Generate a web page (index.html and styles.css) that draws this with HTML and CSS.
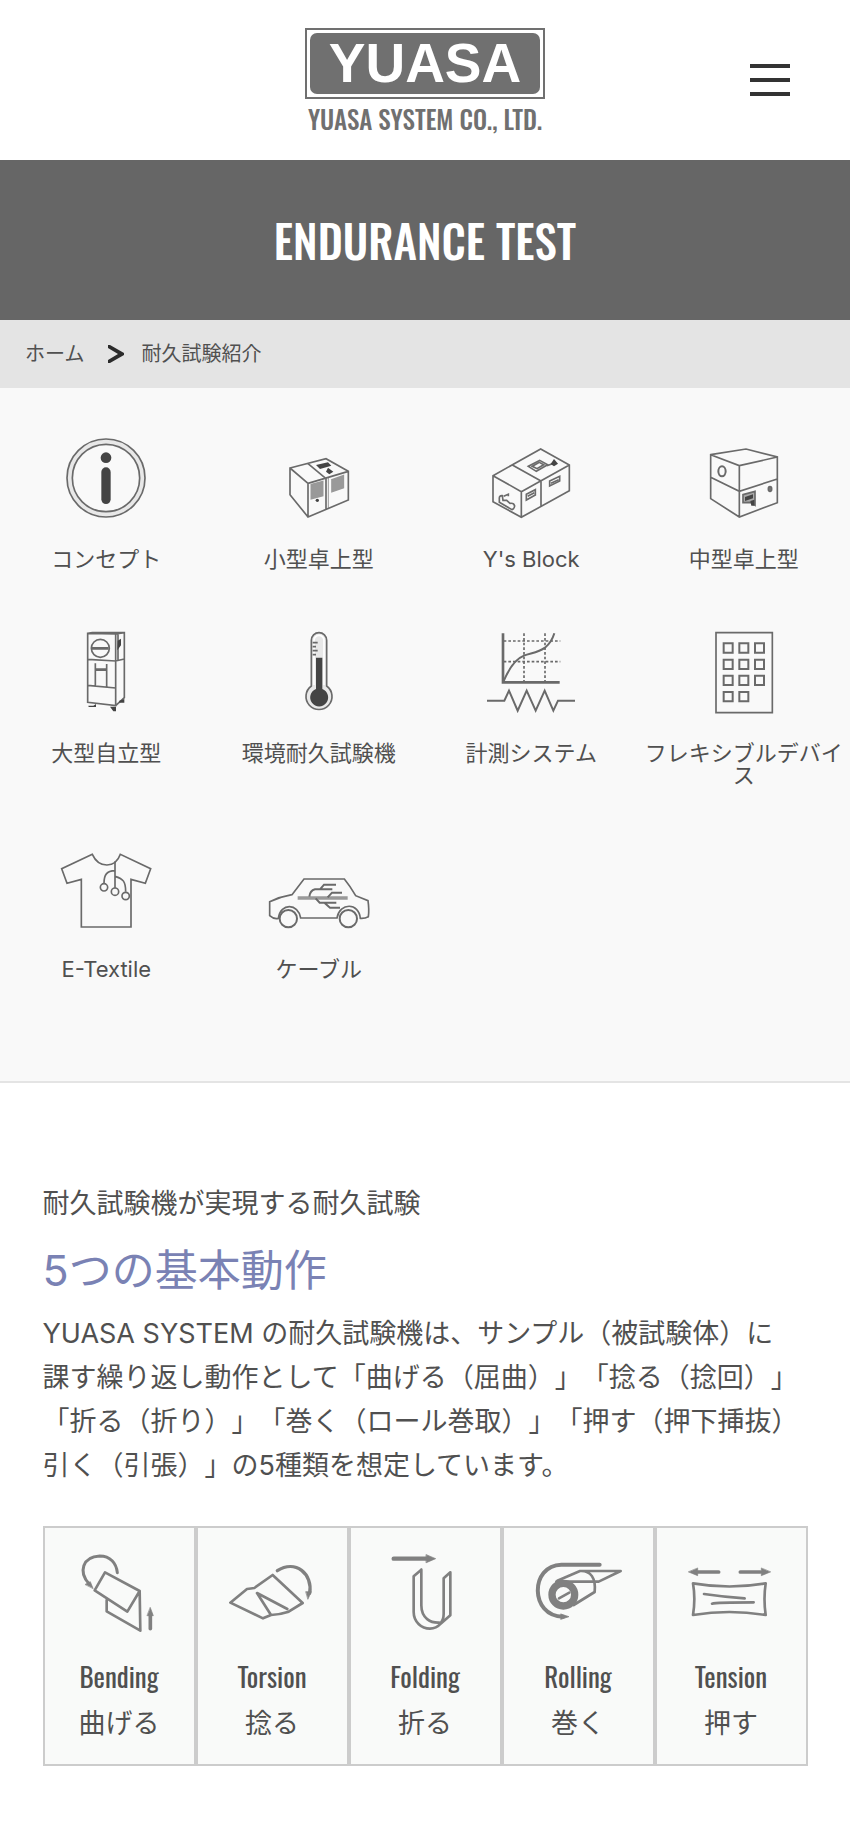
FILE: index.html
```html
<!DOCTYPE html>
<html lang="ja">
<head>
    <meta charset="UTF-8">
    <meta name="viewport" content="width=device-width, initial-scale=1.0">
    <title>耐久試験紹介 | YUASA SYSTEM CO., LTD.</title>
    <link rel="stylesheet" href="styles.css">
</head>
<body>
    <header class="header">
        <a class="logo" href="#">
            <span class="logo-frame"><span class="logo-mark">YUASA</span></span>
            <span class="logo-name">YUASA SYSTEM CO., LTD.</span>
        </a>
        <button class="menu-button" type="button" aria-label="メニュー">
            <span></span>
            <span></span>
            <span></span>
        </button>
    </header>

    <div class="hero">
        <h1>ENDURANCE TEST</h1>
    </div>

    <nav class="breadcrumb">
        <a href="#">ホーム</a>
        <svg width="16" height="18" viewBox="0 0 16 18"><path d="M0 0h2l14 8v2L2 18H0v-3l10-6L0 3z" fill="#2b2b2b"/></svg>
        <span>耐久試験紹介</span>
    </nav>

    <nav class="categories">
        <a class="category" href="#">
            <span class="category-icon">
                <svg width="80" height="80" viewBox="0 0 240 240">
                    <circle cx="120" cy="120" r="109" stroke="#e8e8e8" stroke-width="14"/>
                    <circle cx="120" cy="120" r="117"/>
                    <circle cx="120" cy="120" r="101"/>
                    <circle cx="120" cy="59" r="16" class="solid"/>
                    <rect x="106" y="88" width="28" height="110" rx="14" class="solid"/>
                </svg>
            </span>
            <span>コンセプト</span>
        </a>
        <a class="category" href="#">
            <span class="category-icon">
                <svg width="60" height="60" viewBox="867 113 180 180">
                    <path d="M870 143l108-28 67 38v86l-121 51-54-67zM870 143l54 46v101M924 189l121-36M924 130l54 45v92"/>
                    <path d="M985 172v93" class="thin"/>
                    <path d="M948 134l36-8 10 10-34 10zM984 142l16 12-12 8-10-8z" class="solid"/>
                    <path d="M934 193l34-9v42l-34 9zM996 178l34-12v36l-34 12z" fill="#999" stroke="#999"/>
                    <circle cx="952" cy="240" r="5" class="solid"/>
                </svg>
            </span>
            <span>小型卓上型</span>
        </a>
        <a class="category" href="#">
            <span class="category-icon">
                <svg width="78" height="70" viewBox="201 83 234 210">
                    <path d="M204 166l143-80 86 48v77l-144 80-85-47zM204 166l85 48v77M289 214l144-80M262 134l86 48v76"/>
                    <path d="M310 138l34-18 24 13-34 20zM322 138l21-12 13 7-20 12zM366 136l16-6"/>
                    <path d="M387 116l12 14-12 8-10-7z" class="solid"/>
                    <path d="M304 222l27-14v16l-27 15zM374 182l30-14v14l-30 15z"/>
                    <path d="M308 228l20-11M378 189l23-11"/>
                    <path d="M232 226q-10-1-9 10v10l38 22q7-2 8-11q-2-10-14-8l-10-9h-11zM236 228l14-6v6"/>
                </svg>
            </span>
            <span>Y's Block</span>
        </a>
        <a class="category" href="#">
            <span class="category-icon">
                <svg width="68" height="70" viewBox="855 83 204 210">
                    <path d="M857 103l106-17 94 24v137l-114 43-86-55zM857 103l86 33v154M943 136l114-26M857 171l86 42 114-37"/>
                    <ellipse cx="891" cy="153" rx="11" ry="15" stroke-width="6"/>
                    <path d="M954 223l36-10v42l-14-9-22 1z" fill="#aaa"/>
                    <path d="M960 230l24-8v12l-24 8zM976 242l12-4v18h-9z" class="solid"/>
                    <ellipse cx="1035" cy="206" rx="5" ry="7" fill="#777"/>
                </svg>
            </span>
            <span>中型卓上型</span>
        </a>
        <a class="category" href="#">
            <span class="category-icon">
                <svg width="38" height="80" viewBox="261 66 114 240">
                    <path d="M263 70l84 2v215l-84-10zM263 70l14-2h96v195l-26 24M347 72l26-4M354 73v78M263 148l84 5 26-6M347 153v134M263 226l84 8M286 160v68M320 162v70"/>
                    <circle cx="301" cy="115" r="27"/>
                    <path d="M276 115h50M287 179h32" stroke-width="8"/>
                    <path d="M353 92l10-6v20l-11 15M265 287h15l8-5v9h-22M330 290h18v14h-8zM358 272l15-5v11h-15z" class="solid"/>
                </svg>
            </span>
            <span>大型自立型</span>
        </a>
        <a class="category" href="#">
            <span class="category-icon">
                <svg width="28" height="80" viewBox="915 66 84 240">
                    <path d="M934 228V91a23 23 0 0 1 46 0v137a39 39 0 1 1-46 0z" fill="#e8e8e8"/>
                    <path d="M942 225V91a15 15 0 0 1 30 0v134" stroke="#fff"/>
                    <path d="M938 98h15M938 110h10M938 122h15M938 134h10"/>
                    <path d="M948 143h19v94a27 27 0 1 1-19 0z" class="solid"/>
                </svg>
            </span>
            <span>環境耐久試験機</span>
        </a>
        <a class="category" href="#">
            <span class="category-icon">
                <svg width="88" height="80" viewBox="186 66 264 240">
                    <path d="M234 70v147h170" stroke-width="8"/>
                    <path d="M236 93h170M236 155h170M297 70v145M360 70v145" stroke-dasharray="8 6" stroke-width="5"/>
                    <path d="M236 213c12-28 33-65 61-76 22-8 43-9 63-24 14-11 22-23 28-43M186 272h52l14-30 26 60 27-60 27 60 27-60 26 60 14-30h51" stroke-width="6"/>
                </svg>
            </span>
            <span>計測システム</span>
        </a>
        <a class="category" href="#">
            <span class="category-icon">
                <svg width="58" height="80" viewBox="870 68 174 240">
                    <path d="M873 70h169v240H873z" stroke-width="5"/>
                    <path d="M896 102h27v28h-27zM943 102h27v28h-27zM990 102h27v28h-27zM896 151h27v28h-27zM943 151h27v28h-27zM990 151h27v28h-27zM896 199h27v28h-27zM943 199h27v28h-27zM990 199h27v28h-27zM896 248h27v28h-27zM943 248h27v28h-27z" stroke-width="6"/>
                </svg>
            </span>
            <span>フレキシブルデバイス</span>
        </a>
        <a class="category" href="#">
            <span class="category-icon">
                <svg width="90" height="75" viewBox="183 66 270 225">
                    <path d="M277 70l-92 43 16 44 43-12v143h149V145l43 12 16-44-91-43c-15 43-65 42-84 0z"/>
                    <path d="M345 91v80M345 119c-25 1-33 12-33 38M345 136c25 8 32 15 32 46"/>
                    <g fill="#f9f9f9">
                        <circle cx="312" cy="169" r="11"/>
                        <circle cx="345" cy="182" r="11"/>
                        <circle cx="377" cy="195" r="11"/>
                    </g>
                </svg>
            </span>
            <span>E-Textile</span>
        </a>
        <a class="category" href="#">
            <span class="category-icon">
                <svg width="100" height="50" viewBox="807 141 300 150">
                    <path d="M835 262q-14 3-26-8v-42q32-15 67-21l36-47h121q18 22 34 50l37 15q4 28 1 48-10 6-24 5c-4-48-62-48-70-1H902c-7-44-60-47-67 1z"/>
                    <circle cx="865" cy="263" r="26" stroke-width="6"/>
                    <circle cx="1045" cy="263" r="26" stroke-width="6"/>
                    <path d="M893 201h150" stroke="#999" stroke-width="10"/>
                    <path d="M928 197q2-18 17-22h52M960 175l12-14h36M983 199l13-14h30M947 202l12 13h50M974 216l16 14h30" stroke-width="6"/>
                </svg>
            </span>
            <span>ケーブル</span>
        </a>
    </nav>

    <main class="section">
        <p>耐久試験機が実現する耐久試験</p>
        <h2>5つの基本動作</h2>
        <p>YUASA SYSTEM の耐久試験機は、サンプル（被試験体）に<br>課す繰り返し動作として「曲げる（屈曲）」「捻る（捻回）」「折る（折り）」「巻く（ロール巻取）」「押す（押下挿抜）引く（引張）」の5種類を想定しています。</p>

        <ul class="motions">
            <li>
                <a class="motion" href="#">
                    <svg width="100" height="90" viewBox="118 115 300 270">
                        <path d="M178 222c-32-34-20-81 32-83 32 0 50 21 53 50" stroke-width="9"/>
                        <path d="M167 224l15-8 8 20z" class="head"/>
                        <path d="M195 242l31-54 104 56-37 62zM330 244l2 119-101-58v-34"/>
                        <path d="M362 312v45" stroke-width="11"/>
                        <path d="M362 294l9 24h-18z" class="head"/>
                    </svg>
                    <span class="motion-en">Bending</span>
                    <span>曲げる</span>
                </a>
            </li>
            <li>
                <a class="motion" href="#">
                    <svg width="100" height="90" viewBox="577 115 300 270">
                        <path d="M602 279l50-41q12-2 22-3l55-39 90 84-42 26q-24 8-53 10l-24 10zM724 316l-42-66 91 48"/>
                        <path d="M743 183c55-35 107 10 97 68" stroke-width="10"/>
                        <path d="M829 246h16l-10 22z" class="head"/>
                    </svg>
                    <span class="motion-en">Torsion</span>
                    <span>捻る</span>
                </a>
            </li>
            <li>
                <a class="motion" href="#">
                    <svg width="100" height="90" viewBox="106 115 300 270">
                        <path d="M162 147h100" stroke-width="13"/>
                        <path d="M260 135l28 12-28 12z" class="head"/>
                        <path d="M245 180l-23 20v107c0 29 23 50 49 50 15 0 24-6 32-15l29-25V188l-20 18v107c0 12-4 22-11 29M245 180v107c0 40 29 53 53 52"/>
                    </svg>
                    <span class="motion-en">Folding</span>
                    <span>折る</span>
                </a>
            </li>
            <li>
                <a class="motion" href="#">
                    <svg width="100" height="90" viewBox="565 115 300 270">
                        <path d="M780 165H665c-95 2-95 155 5 156" stroke-width="12"/>
                        <path d="M664 313l24 8-24 8z" class="head"/>
                        <circle cx="671" cy="255" r="34" stroke-width="22"/>
                        <path d="M653 213l68-29h122l-66 32H650M721 184c33-2 48 22 44 63l-63 39M658 266l31-17"/>
                    </svg>
                    <span class="motion-en">Rolling</span>
                    <span>巻く</span>
                </a>
            </li>
            <li>
                <a class="motion" href="#">
                    <svg width="100" height="90" viewBox="155 115 300 270">
                        <path d="M206 187h62M333 187h60" stroke-width="11"/>
                        <path d="M205 176v22l-27-11zM396 176v22l27-11z" class="head"/>
                        <path d="M191 221q110 19 218 0 -7 47 0 95-109-18-218 0 8-48 0-95z"/>
                        <path d="M224 253q60 9 122 13M248 282q12-4 125-4"/>
                    </svg>
                    <span class="motion-en">Tension</span>
                    <span>押す</span>
                </a>
            </li>
        </ul>
    </main>
</body>
</html>
```
FILE: styles.css
```css
* {
    box-sizing: border-box;
}
body {
    margin: 0;
    font-family: Inter, "Noto Sans CJK JP", sans-serif;
    font-size: 27px;
    line-height: 44px;
    color: #505050;
    background-color: #fff;
    text-spacing-trim: space-all;
}
a {
    color: inherit;
    text-decoration: none;
}
h1, h2, p, ul {
    margin: 0;
    padding: 0;
    font-weight: normal;
}
svg {
    display: block;
    overflow: visible;
}

/* header */
.header {
    display: grid;
    grid-template-columns: 1fr auto 1fr;
    align-items: center;
    height: 160px;
    padding: 0 60px;
}
.logo {
    grid-column: 2;
    display: flex;
    flex-direction: column;
    align-items: center;
    color: #707070;
    font-weight: bold;
    white-space: nowrap;
}
.logo-frame {
    width: 240px;
    padding: 3px;
    border: 2px solid #707070;
}
.logo-mark {
    display: block;
    border-radius: 7px;
    background-color: #707070;
    color: #fff;
    font-family: "Liberation Sans", sans-serif;
    font-size: 55px;
    line-height: 61px;
    text-align: center;
}
.logo-name {
    margin-top: 6px;
    font-family: Oswald, sans-serif;
    font-size: 25px;
    font-weight: 500;
    line-height: 28px;
}
.menu-button {
    justify-self: end;
    display: flex;
    flex-direction: column;
    gap: 10px;
    width: 40px;
    padding: 0;
    border: none;
    background: none;
    cursor: pointer;
}
.menu-button span {
    height: 4px;
    background-color: #333;
}

/* page title */
.hero {
    display: flex;
    align-items: center;
    justify-content: center;
    height: 160px;
    background-color: #666;
    color: #fff;
}
.hero h1 {
    font-family: Oswald, sans-serif;
    font-size: 45px;
    font-weight: 500;
    line-height: 60px;
}
.breadcrumb {
    display: flex;
    align-items: center;
    height: 68px;
    padding: 0 25px;
    background-color: #e4e4e4;
    font-size: 20px;
}
.breadcrumb svg {
    margin: 0 17px 0 24px;
}

/* category icons */
.categories {
    display: grid;
    grid-template-columns: repeat(4, 1fr);
    padding: 50px 0 39px;
    border-bottom: 2px solid #e4e4e4;
    background-color: #f9f9f9;
    font-size: 22px;
    line-height: 22px;
    text-align: center;
}
.category {
    padding-bottom: 62px;
}
.category-icon {
    display: flex;
    align-items: flex-end;
    justify-content: center;
    height: 80px;
    margin-bottom: 30px;
}
.category svg {
    fill: none;
    stroke: #6a6a6a;
    stroke-width: 5;
}
.category .thin {
    stroke-width: 2;
}
.category .solid {
    fill: #444;
    stroke: none;
}

/* five motions */
.section {
    padding: 99px 5% 82px;
}
.section h2 {
    margin: 22px 0 20px;
    color: #7a82b4;
    font-size: 43px;
}
.motions {
    display: grid;
    grid-template-columns: repeat(5, 1fr);
    margin-top: 38px;
    list-style: none;
}
.motion {
    display: flex;
    flex-direction: column;
    align-items: center;
    padding: 20px 0 18px;
    border: 2px solid #ccc;
    background-color: #f9faf9;
}
.motion svg {
    margin-bottom: 16px;
    fill: none;
    stroke: #808080;
    stroke-width: 8;
    stroke-linejoin: round;
    stroke-linecap: round;
}
.motion .head {
    fill: #808080;
    stroke-width: 2;
}
.motion-en {
    margin-bottom: 4px;
    font-family: Oswald, sans-serif;
    font-weight: 400;
}
```
